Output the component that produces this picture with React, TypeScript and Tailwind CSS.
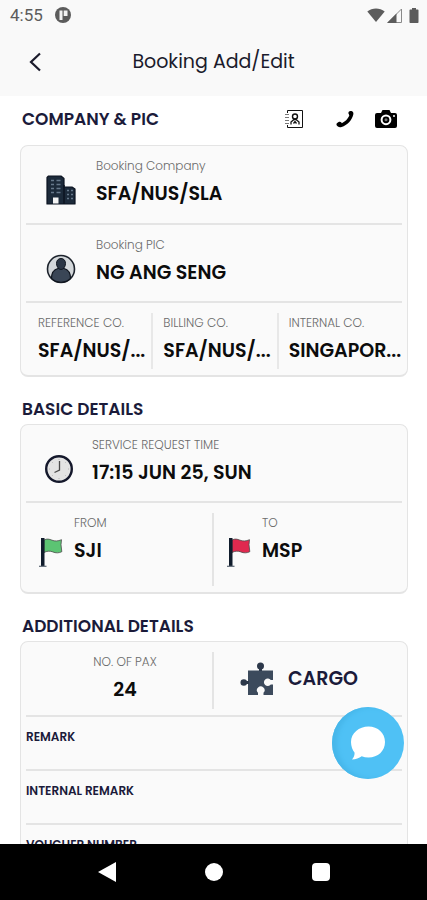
import { useState } from 'react';
import type { ReactNode } from 'react';

function WifiIcon() {
    return (
        <svg viewBox="0 0 18 14" className="w-[18px] h-[14px]" fill="#5c5c5c">
            <path d="M9 14 .3 3.400C5.200-.6 12.800-.6 17.700 3.400Z" />
        </svg>
    );
}

function SignalIcon() {
    return (
        <svg viewBox="0 0 16 15" className="w-4 h-[15px]">
            <path d="M1 14.500 14.500 1v13.500Z" fill="#f9f9f9" stroke="#8a8a8a" />
            <path d="M0 15 9.500 5.500V15Z" fill="#5c5c5c" />
        </svg>
    );
}

function BatteryIcon() {
    return (
        <svg viewBox="0 0 10 15" className="w-[10px] h-[15px]" fill="#5c5c5c">
            <path d="M3 0h4v1.500h1.800q.7 0 .7.700v12.100q0 .7-.7.700H1.200q-.7 0-.7-.7V2.200q0-.7.7-.7H3Z" />
        </svg>
    );
}

function AppIcon() {
    return (
        <svg viewBox="0 0 16 16" className="w-4 h-4">
            <circle cx="8" cy="8" r="8" fill="#5c5c5c" />
            <path d="M4.500 3.500h3v9.500h-3z" fill="#f4f4f4" />
            <path d="M8.700 3.500h3.800v5.500H8.700Z" fill="#f4f4f4" />
        </svg>
    );
}

function ContactsIcon() {
    return (
        <svg viewBox="0 0 20 20" className="w-5 h-5" fill="none" stroke="#111" strokeWidth="1">
            <path d="M3.500 4V1.500H18.500V18.500H3.500V16" />
            <path d="M1 5.500h4M1 8.500h4M1 11.500h4M1 14.500h4" stroke="#777" />
            <circle cx="11" cy="7.500" r="2.500" strokeWidth="1.400" />
            <path d="M7 15.500v-2.500l3-2.500h2l3 2.500v2.500M9.500 14.500l1.500-2 1.500 2" strokeWidth="1.300" />
        </svg>
    );
}

function PhoneIcon() {
    return (
        <svg viewBox="0 0 18 18" className="w-[18px] h-[18px]" fill="#000">
            <path d="M12.800 1.700c.6-.8 1.700-1 2.700-.6 1.500.7 2.200 1.600 1.800 3.400-1.200 5.500-6 10.800-11.700 12.400-2 .6-3.500.2-4.600-1.100-.8-1-.7-2 .2-2.700l1.400-1c.9-.6 2-.5 2.600.2l.6.900c3.300-1.600 5.900-4.200 7.500-7.500l-.4-1.400c-.6-.8-.7-1.800-.1-2.600Z" />
        </svg>
    );
}

function CameraIcon() {
    return (
        <svg viewBox="0 0 22 18" className="w-[22px] h-[18px]">
            <path d="M2 3h4l1.500-3h7L16 3h4q2 0 2 2v11q0 2-2 2H2q-2 0-2-2V5q0-2 2-2Z" fill="#000" />
            <circle cx="11" cy="9.800" r="4.400" fill="none" stroke="#fff" strokeWidth="2" />
            <circle cx="11" cy="9.800" r="1.500" fill="#777" />
            <path d="M18 5.200h2v1.500h-2z" fill="#fff" />
        </svg>
    );
}

function BuildingIcon() {
    return (
        <svg viewBox="0 0 30 30" className="w-[30px] h-[30px]">
            <path d="M1 2.500 2.500 1H15l3 2.500V12h8l3 2v15H1Z" fill="#1c2a3a" stroke="#0b1320" strokeWidth="1.200" strokeLinejoin="round" />
            <path d="M18 10v19" stroke="#0b1320" strokeWidth="1.500" />
            <path
                d="M5 5.500h3M10.500 5.500h4M5 9.500h3M10.500 9.500h4M5 13.500h3M10.500 13.500h4M5 17.500h3M10.500 17.500h4M21 15.500h2M25 15.500h2M21 19.500h2M25 19.500h2M21 23.500h2M25 23.500h2"
                stroke="#66788b"
                strokeWidth="1.400"
            />
            <path d="M7 28.500v-6h5.500v6Z" fill="#f4f4f4" />
        </svg>
    );
}

function PersonIcon() {
    return (
        <svg viewBox="0 0 30 30" className="w-[30px] h-[30px]">
            <circle cx="15" cy="15" r="13.500" fill="#d3d7da" stroke="#1d232c" strokeWidth="1.600" />
            <path d="M5.500 24.500c0-6 2.500-9 6.500-10h6c4 1 6.500 4 6.500 10-5 5-14 5-19 0Z" fill="#3a4656" stroke="#10161f" strokeWidth="1.200" />
            <path d="M10.500 9.500c0-3 1.700-5 4.500-5s4.500 2 4.500 5-2 6-4.500 6-4.500-3-4.500-6Z" fill="#2b3645" stroke="#10161f" />
        </svg>
    );
}

function ClockIcon() {
    return (
        <svg viewBox="0 0 30 30" className="w-[30px] h-[30px]">
            <circle cx="15" cy="15" r="12.800" fill="#e3e3e3" stroke="#14182b" strokeWidth="2.400" />
            <path d="M15 5v1M15 24v1M5 15h1M24 15h1M8 8l.7.7M22 8l-.7.7M8 22l.7-.7M22 22l-.7-.7" stroke="#b4b4b4" />
            <path d="M15.500 7v9l-5 2.500" fill="none" stroke="#4c4c4c" strokeWidth="1.300" />
        </svg>
    );
}

function FlagIcon({ color }: { color: string }) {
    return (
        <svg viewBox="0 0 24 30" className="w-6 h-[30px]">
            <path d="M5 3c3-1.500 5-1 8 .2s6 1 9.500-.5l-.5 5 .8 7c-3 1.500-6 1.500-9 .2s-6-.8-8.800.6Z" fill={color} stroke="#4b4b4b" strokeWidth=".8" />
            <path d="M2 1h3.500v28H2z" fill="#101c2c" />
            <path d="M0 29.300h7.500" stroke="#5b6672" strokeWidth="1.200" />
        </svg>
    );
}

function PuzzleIcon() {
    return (
        <svg viewBox="0 0 34 34" className="w-[34px] h-[34px]">
            <path d="M8 8.500h25v9.500h-2.200a3.800 3.800 0 1 0 0 4.500H33V33h-9.500v-2.200a3.800 3.800 0 1 0-5.500 0V33H8Z" fill="#3c4a5c" />
            <circle cx="20.500" cy="4" r="3.500" fill="#2c384a" />
            <path d="M19 5h3v4h-3z" fill="#2c384a" />
            <circle cx="3.800" cy="20.500" r="3.300" fill="#2c384a" />
            <path d="M5 19h4v3H5z" fill="#2c384a" />
        </svg>
    );
}

function ChatIcon() {
    return (
        <svg viewBox="0 0 36 34" className="w-9 h-[34px]" fill="#fff">
            <path d="M18.500 0.500C28 .5 35 7 35 16s-7 15.500-16.500 15.500c-2.500 0-4.800-.4-6.800-1.200-2.700 2-5.700 3-9.700 3.200 1.700-1.800 2.600-4 2.600-6.700C2.500 24 1 20.300 1 16 1 7 9 .5 18.500.5Z" />
        </svg>
    );
}

interface SectionProps {
    title: string;
    children: ReactNode;
}

function Section({ title, children }: SectionProps) {
    return (
        <section className="mt-4">
            <div className="h-[31px] flex items-center px-0.5">
                <h2 className="text-[17px] leading-6 font-semibold text-[#1b1b3a]">{title}</h2>
            </div>
            <Card>{children}</Card>
        </section>
    );
}

function Card({ children }: { children: ReactNode }) {
    return (
        <div className="bg-[#fafafa] border border-[#e4e4e4] border-b-2 rounded-lg px-[5px] divide-y-2 divide-[#e4e4e4]">
            {children}
        </div>
    );
}

function Detail({ label, value }: { label: string; value: string }) {
    return (
        <div className="min-w-0">
            <p className="text-xs leading-5 font-light text-[#6b6b6b] whitespace-nowrap">{label}</p>
            <p className="mt-1 text-[19px] leading-7 font-semibold text-[#0c0c0c] whitespace-nowrap">{value}</p>
        </div>
    );
}

function TextField({ id, label }: { id: string; label: string }) {
    const [value, setValue] = useState('');

    return (
        <div className="h-[54px] pt-2.5">
            <label htmlFor={id} className="block text-xs leading-5 font-semibold text-[#1b1b3a]">{label}</label>
            <input
                id={id}
                type="text"
                value={value}
                onChange={e => setValue(e.target.value)}
                className="block w-full h-5 text-sm bg-transparent outline-none"
            />
        </div>
    );
}

export default function App() {
    return (
        <div className="h-screen flex flex-col bg-white font-['Poppins','Inter',sans-serif]">
            <header className="bg-[#f9f9f9] shrink-0">
                {/* Status bar */}
                <div className="h-[30px] flex items-center justify-between pl-2.5 pr-2 text-[#5c5c5c]">
                    <div className="flex items-center gap-3">
                        <span className="font-['Roboto',sans-serif] text-[17px] leading-5">4:55</span>
                        <AppIcon />
                    </div>
                    <div className="flex items-center gap-0.5">
                        <WifiIcon />
                        <SignalIcon />
                        <span className="pl-1"><BatteryIcon /></span>
                    </div>
                </div>

                <div className="h-16 mb-0.5 grid grid-cols-[70px_1fr_70px] items-center">
                    <button aria-label="Back" className="h-12 flex items-center justify-center">
                        <svg viewBox="0 0 12 20" className="w-3 h-5" fill="none" stroke="#1b1b2c" strokeWidth="2.200">
                            <path d="M11 1.500 2 10l9 8.500" />
                        </svg>
                    </button>
                    <h1 className="text-center text-[19px] leading-7 text-[#1b1b2c] whitespace-nowrap">Booking Add/Edit</h1>
                </div>
            </header>

            <main className="flex-1 min-h-0 overflow-y-auto [scrollbar-width:none] pl-5 pr-[19px]">
                {/* Company */}
                <section>
                    <div className="h-[45px] mb-1 flex items-center justify-between pl-0.5 pr-[11px]">
                        <h2 className="text-[17px] leading-6 font-semibold text-[#1b1b3a]">COMPANY &amp; PIC</h2>
                        <div className="flex items-center">
                            <button aria-label="Contacts" className="mr-8"><ContactsIcon /></button>
                            <button aria-label="Call" className="mr-[21px]"><PhoneIcon /></button>
                            <button aria-label="Camera"><CameraIcon /></button>
                        </div>
                    </div>
                    <Card>
                        <div className="h-[79px] flex items-start gap-5 pl-5 pt-2.5">
                            <span className="pt-[19px]"><BuildingIcon /></span>
                            <Detail label="Booking Company" value="SFA/NUS/SLA" />
                        </div>
                        <div className="h-[78px] flex items-start gap-5 pl-5 pt-2.5">
                            <span className="pt-[19px]"><PersonIcon /></span>
                            <Detail label="Booking PIC" value="NG ANG SENG" />
                        </div>
                        <div className="h-[72px] grid grid-cols-3 pt-2.5 pb-1.5">
                            <div className="pl-3"><Detail label="REFERENCE CO." value="SFA/NUS/..." /></div>
                            <div className="pl-2.5 border-l-2 border-[#e8e8e8]"><Detail label="BILLING CO." value="SFA/NUS/..." /></div>
                            <div className="pl-2.5 border-l-2 border-[#e8e8e8]"><Detail label="INTERNAL CO." value="SINGAPOR..." /></div>
                        </div>
                    </Card>
                </section>

                <Section title="BASIC DETAILS">
                    <div className="h-[78px] flex items-start gap-[18px] pl-[18px] pt-2.5">
                        <span className="pt-[19px]"><ClockIcon /></span>
                        <Detail label="SERVICE REQUEST TIME" value="17:15 JUN 25, SUN" />
                    </div>
                    <div className="h-[89px] grid grid-cols-2 pt-2.5 pb-1.5 divide-x-2 divide-[#e4e4e4]">
                        <div className="flex items-start gap-[11px] pl-[13px]">
                            <span className="pt-6"><FlagIcon color="#5cc473" /></span>
                            <Detail label="FROM" value="SJI" />
                        </div>
                        <div className="flex items-start gap-[11px] pl-[13px]">
                            <span className="pt-6"><FlagIcon color="#e0294f" /></span>
                            <Detail label="TO" value="MSP" />
                        </div>
                    </div>
                </Section>

                <Section title="ADDITIONAL DETAILS">
                    <div className="h-[75px] grid grid-cols-2 pt-2.5 pb-1.5 divide-x-2 divide-[#e4e4e4]">
                        <div className="text-center pl-3">
                            <Detail label="NO. OF PAX" value="24" />
                        </div>
                        <button className="flex items-center gap-3.5 pl-[26px] pb-1">
                            <PuzzleIcon />
                            <span className="text-[19px] leading-7 font-semibold text-[#1b1b3a]">CARGO</span>
                        </button>
                    </div>
                    <TextField id="remark" label="REMARK" />
                    <TextField id="internal-remark" label="INTERNAL REMARK" />
                    <TextField id="voucher-number" label="VOUCHER NUMBER" />
                </Section>
            </main>

            {/* Chat button floats over the form */}
            <button
                aria-label="Chat"
                className="fixed right-[23px] bottom-[121px] w-[72px] h-[72px] rounded-full bg-[#4fc1f5] shadow-[inset_5px_0_4px_#47b7ea] flex items-center justify-center"
            >
                <ChatIcon />
            </button>

            {/* Android navigation bar */}
            <nav className="h-14 shrink-0 bg-black grid grid-cols-3 items-center justify-items-center px-[53px]">
                <button aria-label="Back">
                    <svg viewBox="0 0 18 20" className="block w-[18px] h-5" fill="#fff"><path d="M18 0v20L0 10Z" /></svg>
                </button>
                <button aria-label="Home" className="w-[18px] h-[18px] rounded-full bg-white"></button>
                <button aria-label="Recent apps" className="w-[18px] h-[18px] rounded-sm bg-white"></button>
            </nav>
        </div>
    );
}
